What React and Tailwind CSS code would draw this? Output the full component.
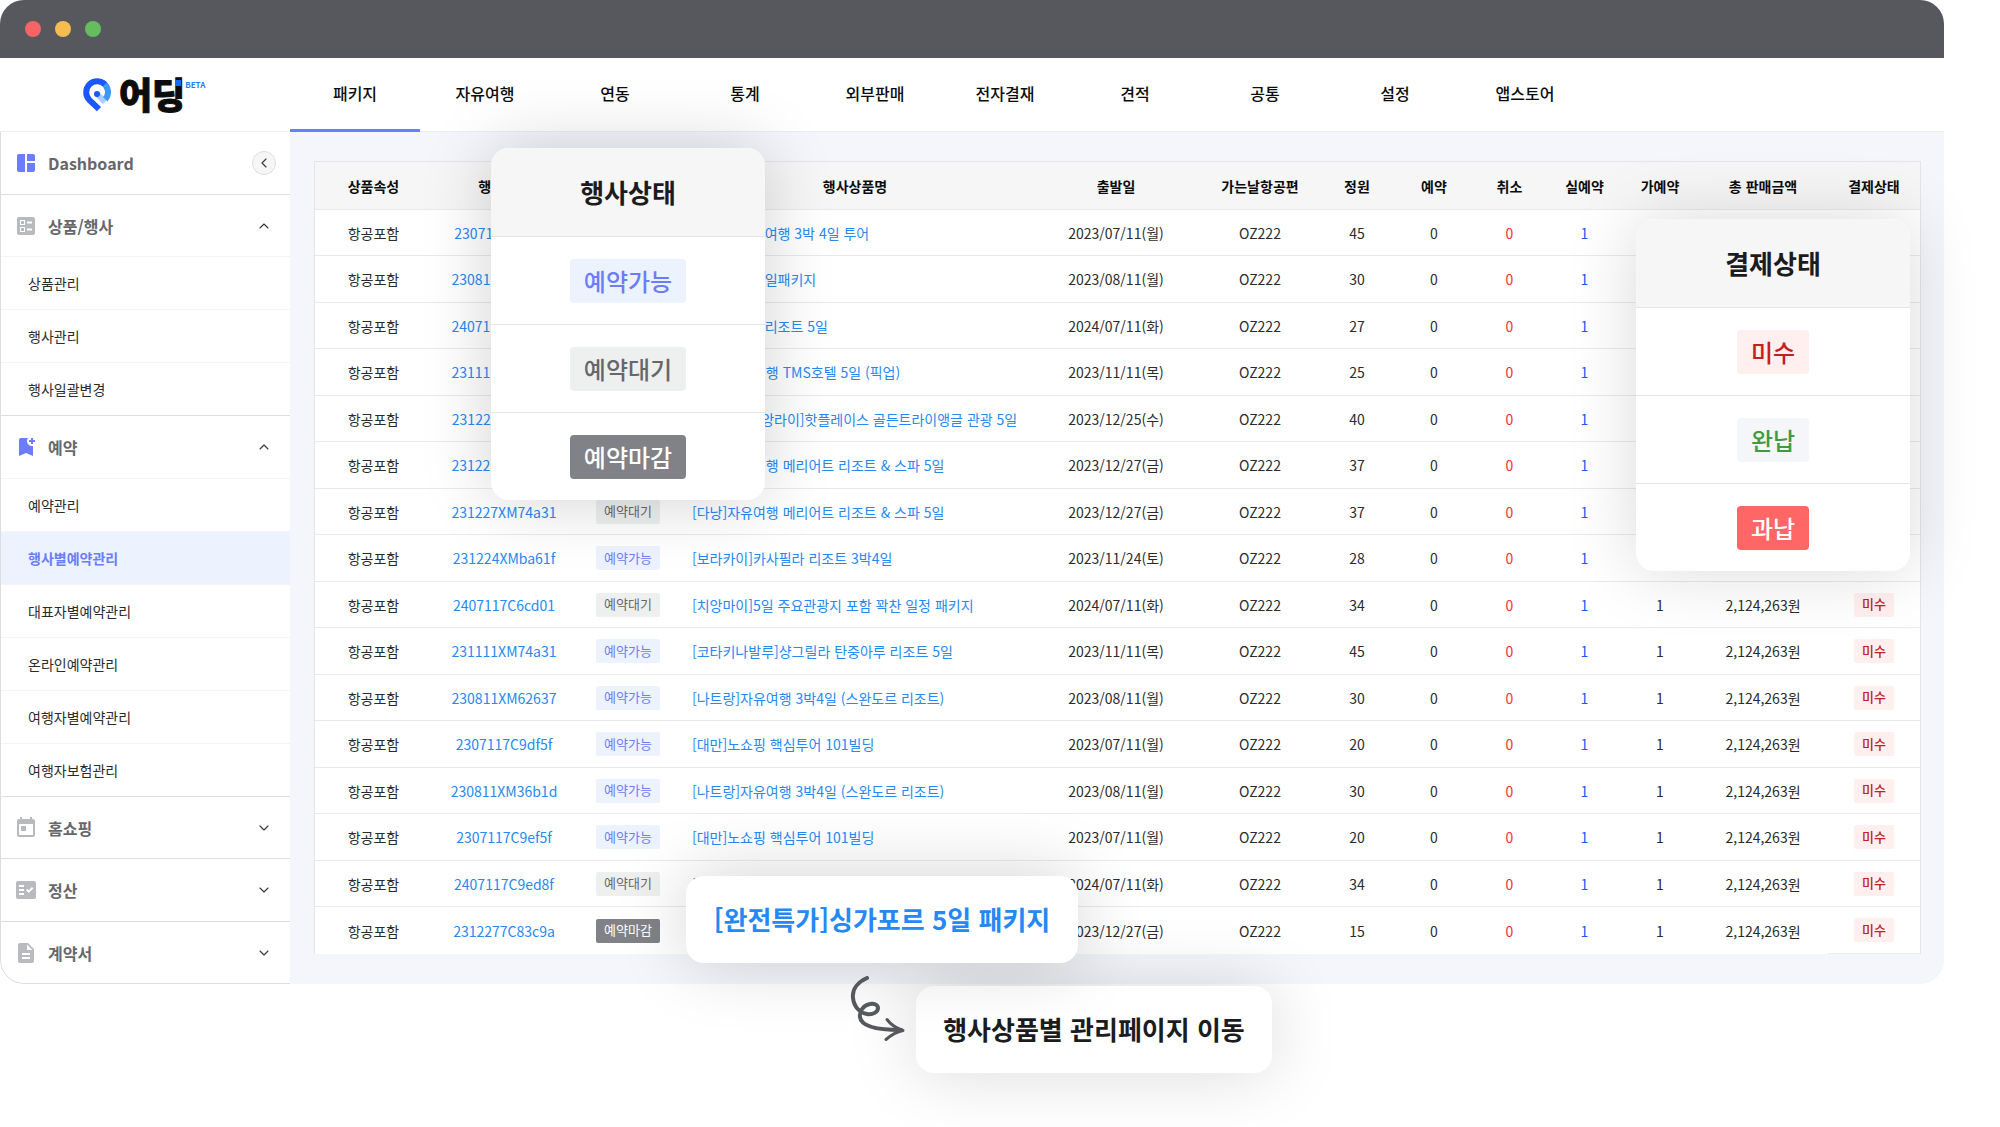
import { useState } from 'react';
import { ChevronDown, ChevronLeft, ChevronUp } from 'lucide-react';
import {
  MdBallot,
  MdBookmarkAdd,
  MdDescription,
  MdFactCheck,
  MdSpaceDashboard,
  MdToday,
} from 'react-icons/md';

const tabs = ['패키지', '자유여행', '연동', '통계', '외부판매', '전자결재', '견적', '공통', '설정', '앱스토어'];

const menus = [
  {
    label: '상품/행사',
    icon: MdBallot,
    open: true,
    height: 'h-[61px]',
    items: ['상품관리', '행사관리', '행사일괄변경'],
  },
  {
    label: '예약',
    icon: MdBookmarkAdd,
    open: true,
    active: true,
    height: 'h-[62px]',
    items: ['예약관리', '행사별예약관리', '대표자별예약관리', '온라인예약관리', '여행자별예약관리', '여행자보험관리'],
  },
  { label: '홈쇼핑', icon: MdToday, height: 'h-[61px]', items: [] },
  { label: '정산', icon: MdFactCheck, height: 'h-[62px]', items: [] },
  { label: '계약서', icon: MdDescription, height: 'h-[61px]', items: [] },
];

const columns = [
  { label: '상품속성', width: 'w-[117px]' },
  { label: '행사코드', width: 'w-36' },
  { label: '행사상태', width: 'w-[104px]' },
  { label: '행사상품명', width: 'w-auto' },
  { label: '출발일', width: 'w-[172px]' },
  { label: '가는날항공편', width: 'w-[116px]' },
  { label: '정원', width: 'w-[78px]' },
  { label: '예약', width: 'w-[76px]' },
  { label: '취소', width: 'w-[75px]' },
  { label: '실예약', width: 'w-[75px]' },
  { label: '가예약', width: 'w-[76px]' },
  { label: '총 판매금액', width: 'w-[130px]' },
  { label: '결제상태', width: 'w-[92px]' },
];

const events = [
  { code: '230711XM9df5f', status: '예약가능', name: '[다낭]5성급 여행 3박 4일 투어', date: '2023/07/11(월)', seats: 45 },
  { code: '230811XM62637', status: '예약가능', name: '[세부]자유 3일패키지', date: '2023/08/11(월)', seats: 30 },
  { code: '240711XMc6d01', status: '예약대기', name: '[나트랑]5성 리조트 5일', date: '2024/07/11(화)', seats: 27 },
  { code: '231111XM74a31', status: '예약가능', name: '[다낭]자유여행 TMS호텔 5일 (픽업)', date: '2023/11/11(목)', seats: 25 },
  { code: '231225XM3c9a1', status: '예약가능', name: '[치앙마이치앙라이]핫플레이스 골든트라이앵글 관광 5일', date: '2023/12/25(수)', seats: 40 },
  { code: '231227XM74a31', status: '예약대기', name: '[다낭]자유여행 메리어트 리조트 & 스파 5일', date: '2023/12/27(금)', seats: 37 },
  { code: '231227XM74a31', status: '예약대기', name: '[다낭]자유여행 메리어트 리조트 & 스파 5일', date: '2023/12/27(금)', seats: 37 },
  { code: '231224XMba61f', status: '예약가능', name: '[보라카이]카사필라 리조트 3박4일', date: '2023/11/24(토)', seats: 28 },
  { code: '2407117C6cd01', status: '예약대기', name: '[치앙마이]5일 주요관광지 포함 꽉찬 일정 패키지', date: '2024/07/11(화)', seats: 34 },
  { code: '231111XM74a31', status: '예약가능', name: '[코타키나발루]샹그릴라 탄중아루 리조트 5일', date: '2023/11/11(목)', seats: 45 },
  { code: '230811XM62637', status: '예약가능', name: '[나트랑]자유여행 3박4일 (스완도르 리조트)', date: '2023/08/11(월)', seats: 30 },
  { code: '2307117C9df5f', status: '예약가능', name: '[대만]노쇼핑 핵심투어 101빌딩', date: '2023/07/11(월)', seats: 20 },
  { code: '230811XM36b1d', status: '예약가능', name: '[나트랑]자유여행 3박4일 (스완도르 리조트)', date: '2023/08/11(월)', seats: 30 },
  { code: '2307117C9ef5f', status: '예약가능', name: '[대만]노쇼핑 핵심투어 101빌딩', date: '2023/07/11(월)', seats: 20 },
  { code: '2407117C9ed8f', status: '예약대기', name: '[방콕]파타야 5일 패키지', date: '2024/07/11(화)', seats: 34 },
  { code: '2312277C83c9a', status: '예약마감', name: '[완전특가]싱가포르 5일 패키지', date: '2023/12/27(금)', seats: 15 },
];

const badgeColors = {
  예약가능: 'bg-[#edf2ff] text-[#6b7dfa]',
  예약대기: 'bg-[#eef0f0] text-[#66676b]',
  예약마감: 'bg-[#808287] text-white',
  미수: 'bg-[#ffefee] text-[#c4201d]',
  완납: 'bg-[#f4f6f9] text-[#3f9b3f]',
  과납: 'bg-[#ff6666] text-white',
};

const Badge = ({ label, large }) => (
  <span
    className={`inline-flex items-center justify-center ${badgeColors[label]} ${
      large ? 'h-11 px-3.5 rounded text-2xl font-medium' : 'h-6 px-2 rounded-xs text-[13px]'
    }`}
  >
    {label}
  </span>
);

const Logo = () => (
  <a href="#" aria-label="어딩" className="flex items-start text-[#0c0c0c]">
    <svg viewBox="0 0 28 34" className="w-7 h-[34px]" fill="none">
      <path d="M14.5 16.5 22 24" stroke="#a9cdfb" strokeWidth="6" />
      <path d="M22.3 21.2A11 11 0 0 0 19.5 4.5" stroke="#3e97f2" strokeWidth="6" />
      <path d="M21.8 6.3A11 11 0 0 0 6.2 21.8L16 31.2" stroke="#1b57fa" strokeWidth="6" />
      <circle cx="14" cy="16" r="3" fill="#1b57fa" />
    </svg>
    <span className="relative ml-2 text-[36px] leading-[30px] font-black [-webkit-text-stroke:1px_#0c0c0c]">
      어딩
      <span className="absolute right-1 top-0.5 w-1.5 h-1.5 bg-[#1769ff]"></span>
    </span>
    <span className="mt-0.5 text-[8px] leading-[10px] font-bold text-[#1f7bff]">BETA</span>
  </a>
);

const Sidebar = () => {
  const [current, setCurrent] = useState('행사별예약관리');

  return (
    <aside className="w-[290px] shrink-0 bg-white border-l border-b border-[#dcdddf] rounded-bl-3xl">
      <div className="h-[63px] flex items-center pl-[13px] pr-3.5 border-b border-[#dcdddf]">
        <MdSpaceDashboard className="w-6 h-6 text-[#6b7dfa]" />
        <a href="#" className="ml-2.5 flex-1 text-base font-bold text-[#66676b]">Dashboard</a>
        <button
          aria-label="메뉴 접기"
          className="w-6 h-6 flex items-center justify-center rounded-full border border-[#dcdddf] bg-[#f6f6f7] text-[#3a3b3e]"
        >
          <ChevronLeft className="w-4 h-4" strokeWidth={1.75} />
        </button>
      </div>

      {menus.map(({ label, icon: Icon, open, active, height, items }) => (
        <section key={label} className="border-b border-[#dcdddf] last:border-b-0">
          <button className={`w-full flex items-center pl-[13px] pr-[18px] text-left ${height}`}>
            <Icon className={`w-6 h-6 ${active ? 'text-[#6b7dfa]' : 'text-[#b9babd]'}`} />
            <span className="ml-2.5 flex-1 text-base font-bold text-[#66676b]">{label}</span>
            {open
              ? <ChevronUp className="w-4 h-4 text-[#3a3b3e]" strokeWidth={1.75} />
              : <ChevronDown className="w-4 h-4 text-[#3a3b3e]" strokeWidth={1.75} />}
          </button>
          {items.map((item) => (
            <button
              key={item}
              onClick={() => setCurrent(item)}
              className={`w-full h-[53px] flex items-center pl-[27px] border-t border-[#f4f4f5] text-sm ${
                item === current ? 'bg-[#edf2ff] font-bold text-[#6b7dfa]' : 'text-[#2a2b2d]'
              }`}
            >
              {item}
            </button>
          ))}
        </section>
      ))}
    </aside>
  );
};

const EventTable = () => (
  <table className="w-full table-fixed border-separate border-spacing-0 border border-b-0 border-[#e4e5e8] bg-white text-sm text-[#2a2b2d] text-center whitespace-nowrap">
    <thead>
      <tr className="h-12 bg-[#f6f6f7]">
        {columns.map((col) => (
          <th key={col.label} scope="col" className={`border-b border-[#e9eaeb] font-bold text-[#0c0c0c] ${col.width}`}>
            {col.label}
          </th>
        ))}
      </tr>
    </thead>
    <tbody className="[&>tr:not(:last-child)>td]:border-b [&_td]:border-[#e9eaeb]">
      {events.map((event, i) => (
        <tr key={i} className="h-[46px] even:h-[47px]">
          <td>항공포함</td>
          <td><a href="#" className="text-[#2589f5]">{event.code}</a></td>
          <td><Badge label={event.status} /></td>
          <td className="pl-3 text-left">
            <a href="#" className="text-[#2589f5]">{event.name}</a>
          </td>
          <td>{event.date}</td>
          <td>OZ222</td>
          <td>{event.seats}</td>
          <td>0</td>
          <td className="text-[#f5312e]">0</td>
          <td className="text-[#1b57fa]">1</td>
          <td>1</td>
          <td>2,124,263원</td>
          <td className="border-b font-medium"><Badge label="미수" /></td>
        </tr>
      ))}
    </tbody>
  </table>
);

const StatusCard = ({ title, labels, className }) => (
  <div className={`absolute w-[274px] rounded-[18px] bg-white overflow-hidden ${className}`}>
    <h2 className="h-[88px] pb-px flex items-center justify-center bg-[#f6f6f7] text-[26px] font-bold text-[#1c1c1e]">
      {title}
    </h2>
    <ul>
      {labels.map((label) => (
        <li key={label} className="h-[88px] flex items-center justify-center border-t border-[#e4e5e8]">
          <Badge label={label} large />
        </li>
      ))}
    </ul>
  </div>
);

const App = () => (
  <div
    lang="ko"
    className="relative min-h-screen overflow-hidden bg-white pr-14 pb-36 font-['Noto_Sans_CJK_KR',sans-serif]"
  >
    <div className="rounded-3xl overflow-hidden bg-[#f4f6fb]">
      {/* Window bar */}
      <div className="h-[58px] flex items-center gap-3.5 pl-[25px] bg-[#57585d]">
        <span className="w-4 h-4 rounded-full bg-[#f56565]"></span>
        <span className="w-4 h-4 rounded-full bg-[#f5bd4f]"></span>
        <span className="w-4 h-4 rounded-full bg-[#65bd60]"></span>
      </div>

      <header className="h-[74px] flex bg-white border-b border-[#ecedef]">
        <div className="w-[290px] shrink-0 pl-[83px] pt-5">
          <Logo />
        </div>
        <nav className="flex">
          {tabs.map((tab, i) => (
            <a
              key={tab}
              href="#"
              className={`w-[130px] h-[74px] pb-0.5 flex items-center justify-center border-b-3 text-base font-medium text-[#0c0c0c] ${
                i === 0 ? 'border-[#6b7dfa]' : 'border-transparent'
              }`}
            >
              {tab}
            </a>
          ))}
        </nav>
      </header>

      <div className="flex">
        <Sidebar />
        <main className="flex-1 min-w-0 pl-6 pr-[23px] pt-[29px]">
          <EventTable />
        </main>
      </div>
    </div>

    {/* Floating cards */}
    <StatusCard
      title="행사상태"
      labels={['예약가능', '예약대기', '예약마감']}
      className="left-[491px] top-[148px] shadow-[0_0_70px_rgba(0,0,0,0.18)]"
    />
    <StatusCard
      title="결제상태"
      labels={['미수', '완납', '과납']}
      className="right-[90px] top-[219px] shadow-[0_0_70px_rgba(0,0,0,0.15)]"
    />

    <div className="absolute left-[916px] top-[986px] w-[356px] h-[87px] pb-0.5 flex items-center justify-center rounded-[18px] bg-white text-[26px] font-bold text-[#1c1c1e] shadow-[0_0_70px_rgba(0,0,0,0.15)]">
      행사상품별 관리페이지 이동
    </div>
    <div className="absolute left-[686px] top-[876px] w-[392px] h-[87px] pb-0.5 flex items-center justify-center rounded-[18px] bg-white text-[26px] font-bold text-[#2589f5] shadow-[0_0_70px_rgba(0,0,0,0.18)]">
      [완전특가]싱가포르 5일 패키지
    </div>
    <svg
      viewBox="0 0 56 68"
      className="absolute left-[850px] top-[976px] w-14 h-[68px]"
      fill="none"
      stroke="#57585d"
      strokeWidth="3"
      strokeLinecap="round"
      strokeLinejoin="round"
    >
      <path
        strokeWidth="4"
        d="M17 2C8 6 2 13 3 22c1 9 7 15 14 16 6 1 11-2 11-6 0-3-4-5-8-4-6 1-11 7-10 13 1 9 16 13 41 13"
      />
      <path d="M37 43.500C41 49 46 52 53 54.500 46 56 40 60 36 63.500" />
    </svg>
  </div>
);

export default App;
